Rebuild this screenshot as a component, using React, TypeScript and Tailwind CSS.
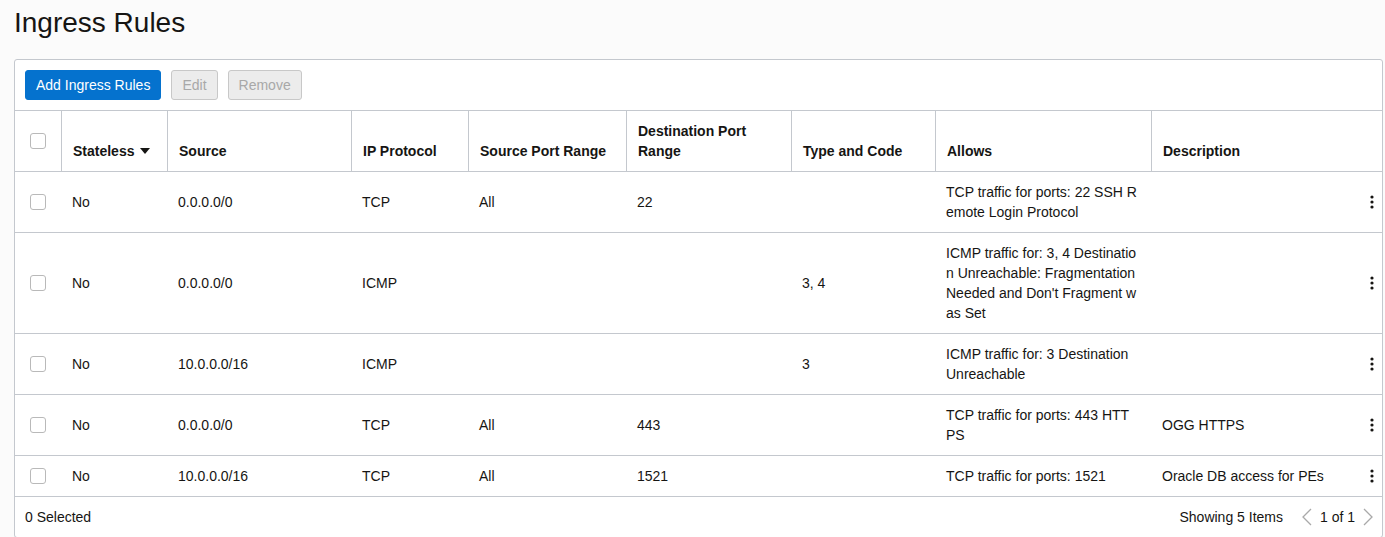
const cols =
  "grid grid-cols-[46px_106px_184px_117px_158px_165px_144px_216px_231px]";

type Rule = {
  stateless: string;
  source: string;
  protocol: string;
  srcPort: string;
  dstPort: string;
  typeCode: string;
  allows: string;
  description: string;
};

const rules: Rule[] = [
  {
    stateless: "No",
    source: "0.0.0.0/0",
    protocol: "TCP",
    srcPort: "All",
    dstPort: "22",
    typeCode: "",
    allows: "TCP traffic for ports: 22 SSH Remote Login Protocol",
    description: "",
  },
  {
    stateless: "No",
    source: "0.0.0.0/0",
    protocol: "ICMP",
    srcPort: "",
    dstPort: "",
    typeCode: "3, 4",
    allows:
      "ICMP traffic for: 3, 4 Destination Unreachable: Fragmentation Needed and Don't Fragment was Set",
    description: "",
  },
  {
    stateless: "No",
    source: "10.0.0.0/16",
    protocol: "ICMP",
    srcPort: "",
    dstPort: "",
    typeCode: "3",
    allows: "ICMP traffic for: 3 Destination Unreachable",
    description: "",
  },
  {
    stateless: "No",
    source: "0.0.0.0/0",
    protocol: "TCP",
    srcPort: "All",
    dstPort: "443",
    typeCode: "",
    allows: "TCP traffic for ports: 443 HTTPS",
    description: "OGG HTTPS",
  },
  {
    stateless: "No",
    source: "10.0.0.0/16",
    protocol: "TCP",
    srcPort: "All",
    dstPort: "1521",
    typeCode: "",
    allows: "TCP traffic for ports: 1521",
    description: "Oracle DB access for PEs",
  },
];

function Checkbox() {
  return (
    <span className="block w-4 h-4 rounded-[3px] border border-[#b9b9b9] bg-white" />
  );
}

function Kebab() {
  return (
    <svg width="4" height="14" viewBox="0 0 4 14" className="text-[#161513]">
      <circle cx="2" cy="2" r="1.6" fill="currentColor" />
      <circle cx="2" cy="7" r="1.6" fill="currentColor" />
      <circle cx="2" cy="12" r="1.6" fill="currentColor" />
    </svg>
  );
}

function Chevron({ dir }: { dir: "left" | "right" }) {
  return (
    <svg width="11" height="18" viewBox="0 0 11 18" fill="none">
      <polyline
        points={dir === "left" ? "10,1 2,9 10,17" : "1,1 9,9 1,17"}
        stroke="#a9a9a9"
        strokeWidth="1.3"
      />
    </svg>
  );
}

const th = "border-l border-[#c4c8ce] px-[11px] py-[10px] flex items-end font-bold";
const td = "px-[11px] py-[10px] flex items-center";

export default function App() {
  return (
    <div className="min-h-[537px] bg-[#fbfbfb] text-[#161513] font-['Liberation_Sans',Arial,sans-serif] text-[14px] leading-[20px] overflow-hidden">
      <h1 className="pl-[14px] pt-[5px] text-[28px] leading-[36px] font-normal mb-[18px]">
        Ingress Rules
      </h1>

      <div className="ml-[14px] w-[1369px] bg-white border border-[#c4c8ce] rounded-[3px]">
        <div className="flex gap-[10px] p-[10px] border-b border-[#c4c8ce]">
          <button className="h-[30px] px-[10px] rounded-[3px] border border-[#0572ce] bg-[#0572ce] text-white">
            Add Ingress Rules
          </button>
          <button className="h-[30px] px-[10px] rounded-[3px] border border-[#c8c8c8] bg-[#ececec] text-[#a8a8a8]">
            Edit
          </button>
          <button className="h-[30px] px-[10px] rounded-[3px] border border-[#c8c8c8] bg-[#ececec] text-[#a8a8a8]">
            Remove
          </button>
        </div>

        <div className={cols}>
          <div className="flex items-center pl-[15px] py-[10px]">
            <Checkbox />
          </div>
          <div className={th}>
            <span className="flex items-center gap-[6px]">
              Stateless
              <svg width="10" height="6" viewBox="0 0 10 6">
                <polygon points="0,0 10,0 5,6" fill="#161513" />
              </svg>
            </span>
          </div>
          <div className={th}>Source</div>
          <div className={th}>IP Protocol</div>
          <div className={th}>Source Port Range</div>
          <div className={th}>
            Destination Port
            <br />
            Range
          </div>
          <div className={th}>Type and Code</div>
          <div className={th}>Allows</div>
          <div className={th}>Description</div>
        </div>

        {rules.map((r, i) => (
          <div key={i} className={`${cols} border-t border-[#c4c8ce]`}>
            <div className="flex items-center pl-[15px]">
              <Checkbox />
            </div>
            <div className={td}>{r.stateless}</div>
            <div className={td}>{r.source}</div>
            <div className={td}>{r.protocol}</div>
            <div className={td}>{r.srcPort}</div>
            <div className={td}>{r.dstPort}</div>
            <div className={td}>{r.typeCode}</div>
            <div className="pl-[11px] pr-[13px] py-[10px] flex items-center break-all">
              <span>{r.allows}</span>
            </div>
            <div className="pl-[11px] pr-[8px] py-[10px] flex items-center justify-between">
              <span>{r.description}</span>
              <Kebab />
            </div>
          </div>
        ))}

        <div className="flex items-center justify-between border-t border-[#c4c8ce] pl-[10px] pr-[8px] py-[10px]">
          <span>0 Selected</span>
          <div className="flex items-center">
            <span className="mr-[18px]">Showing 5 Items</span>
            <Chevron dir="left" />
            <span className="mx-[8px]">1 of 1</span>
            <Chevron dir="right" />
          </div>
        </div>
      </div>
    </div>
  );
}
